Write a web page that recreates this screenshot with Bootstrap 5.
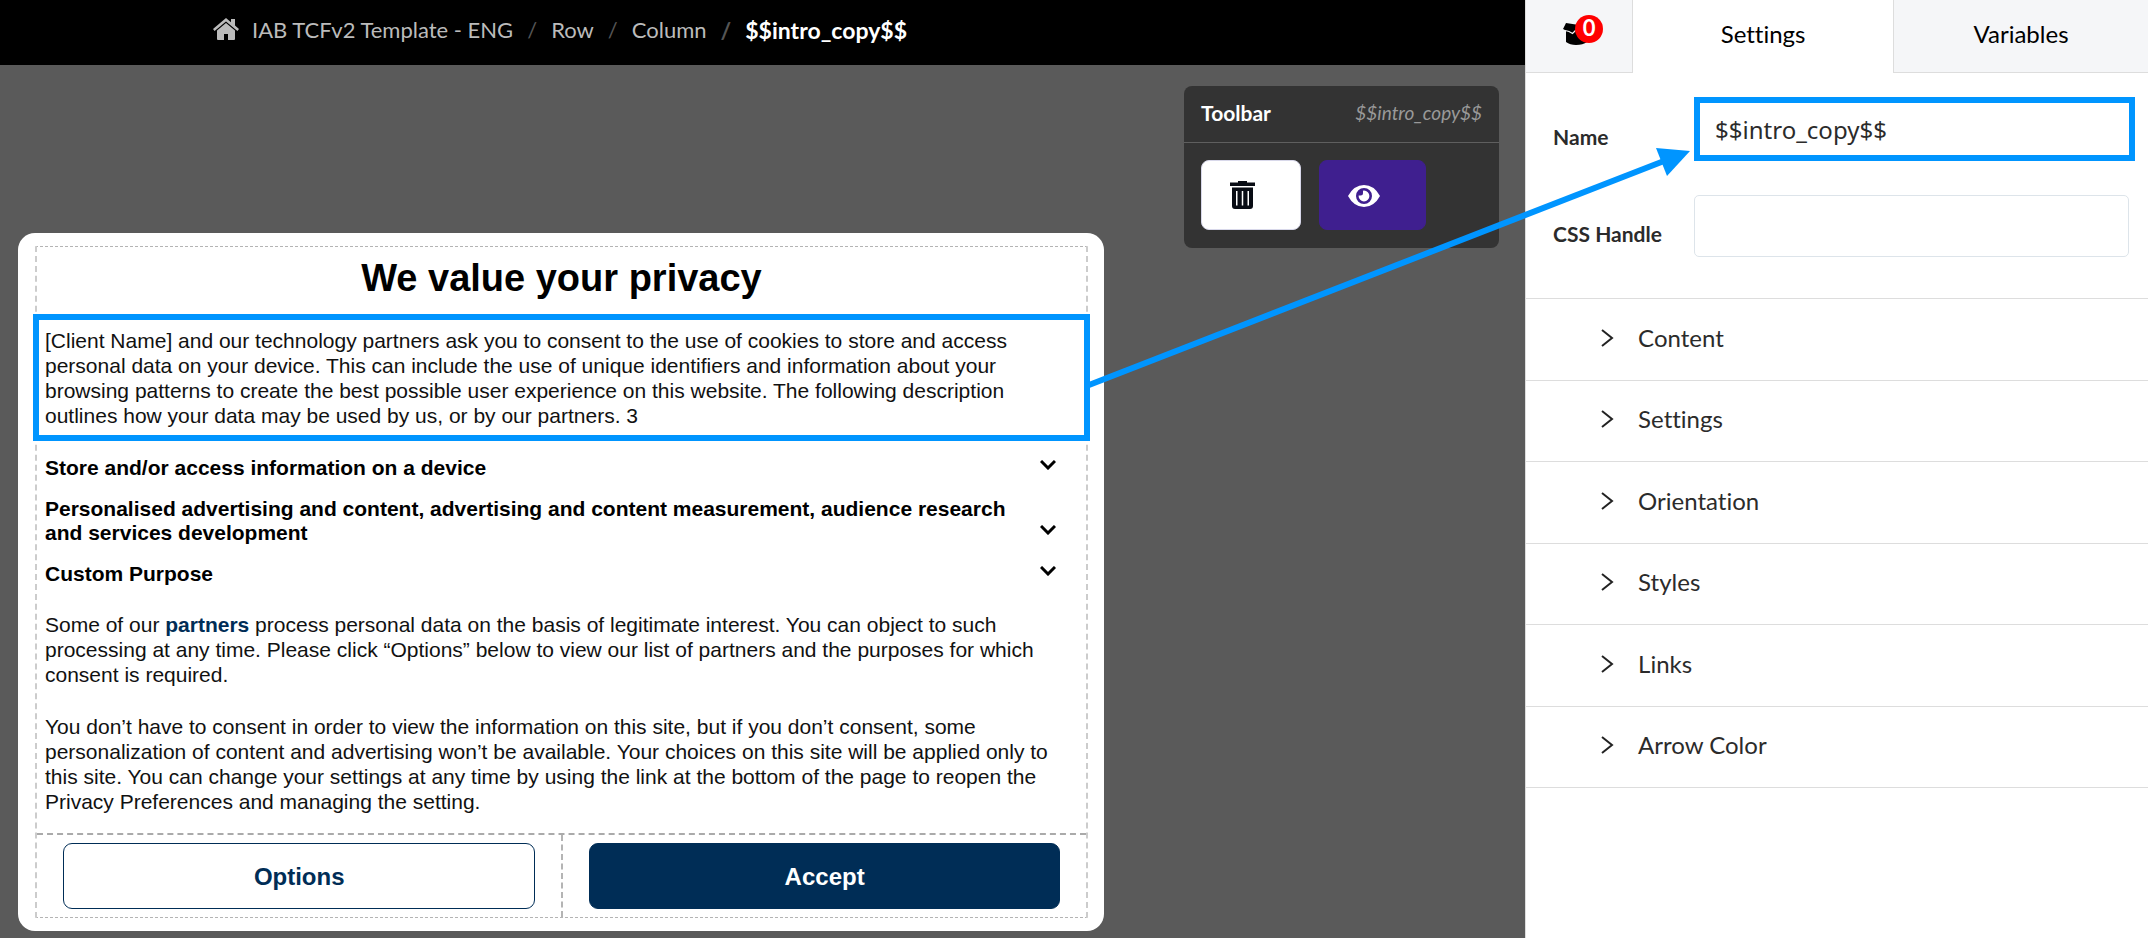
<!DOCTYPE html>
<html lang="en">
<head>
<meta charset="utf-8">
<meta name="viewport" content="width=device-width, initial-scale=1">
<title>Message builder</title>
<link href="https://cdn.jsdelivr.net/npm/bootstrap@5.3.0/dist/css/bootstrap.min.css" rel="stylesheet">
<style>
  body { font-family: Lato, "Open Sans", sans-serif; font-size: 22px; line-height: 28px; color: #2b2b2b; background: #5a5a5a; }
  body, button { font-variant-ligatures: none; }
  .workspace { background: #5a5a5a; }
  .side-panel { flex: 0 0 29%; border-left: 1px solid #ddd; }
  .topbar { height: 65px; padding: 0 213px 5px; background: #000; }
  .topbar .breadcrumb { --bs-breadcrumb-item-padding-x: 14px; --bs-breadcrumb-divider-color: #555; flex-wrap: nowrap; white-space: nowrap; }
  .topbar a { color: #bbb; }
  .topbar .active { font-size: 23px; }
  .topbar .home-icon { margin-right: 13px; margin-top: -2px; }

  .consent { flex: 0 0 71.2%; margin: 168px 0 7px 18px; padding: 13px 16px 13px 17px; border-radius: 17px; font-family: "Liberation Sans", Arial, sans-serif; font-size: 21px; line-height: 25px; color: #111; }
  .frame { border: 1px dashed #b4b4b4; border-width: 1px 2px; border-left-color: #ccc; border-right-color: #ccc; }
  .consent h1 { font-size: 38px; line-height: 46px; margin: 8px 0 13px; color: #000; }
  .picked { border: 6px solid #0095ff; margin: 0 -4px 15px; padding: 8px 70px 7px 6px; }
  .purposes { display: flex; flex-direction: column; gap: 17px; padding: 0 30px 0 8px; margin-bottom: 26px; }
  .purpose { border: 0; background: none; padding: 0; color: #000; font-weight: 700; line-height: 24px; text-align: left; display: flex; justify-content: space-between; align-items: flex-end; gap: 32px; }
  .purpose svg { margin-bottom: 10px; flex: none; }
  .legal { padding: 0 30px 0 8px; }
  .legal p { margin-bottom: 27px; }
  .legal p:last-child { margin-bottom: 19px; }
  .navy { color: #002d56; }
  .choices { border-top: 2px dashed #aaa; }
  .choices > div { padding: 8px 26px; }
  .choices > div + div { border-left: 2px dashed #b4b4b4; }
  .choice { height: 66px; border: 1px solid #002d56; border-radius: 9px; font-size: 24px; font-weight: 700; }
  .choice.outline { color: #002d56; background: #fff; }
  .choice.solid { color: #fff; background: #002d56; }

  .toolbox { width: 315px; height: 162px; margin: 21px 26px 0 0; background: #333; border-radius: 8px; }
  .toolbox header { height: 57px; padding: 0 17px 2px; border-bottom: 1px solid #5f5f5f; }
  .toolbox h2 { font-size: 21px; }
  .toolbox em { font-size: 19px; color: #999; }
  .tools { padding: 17px; gap: 18px; }
  .tool { height: 70px; width: 100px; border-radius: 8px; border: 1px solid #d8d8ea; padding: 0 28px 2px; text-align: left; }
  .tool.show-it { width: 107px; background: #3f1f8f; border-color: #3f1f8f; }

  .tabs { height: 73px; }
  .tabs button { border: 0; border-bottom: 1px solid #ddd; background: #f5f6f8; color: #000; font-size: 24px; padding-bottom: 6px; }
  .tabs .cart-tab { flex: 0 0 106px; padding: 3px 14px 2px 6px; }
  .tabs .current { background: #fff; border: 1px solid #ddd; border-width: 0 1px; flex: 0 0 262px; }
  .count { left: 12px; top: -8px; width: 28px; height: 28px; border-radius: 50%; background: #f00; font-size: 22px; line-height: 26px; }
  .fields { padding: 24px 13px 41px 27px; border-bottom: 1px solid #ddd; }
  .fields > div + div { margin-top: 34px; padding: 0 6px 0 0; }
  .fields label { flex: 0 0 141px; font-size: 21px; font-weight: 700; padding-top: 16px; white-space: nowrap; }
  .fields .form-control { border-radius: 5px; border: 1px solid #dde4ea; height: 62px; }
  .fields .form-control.marked { border: 6px solid #0095ff; border-radius: 0; height: 64px; padding: 0 15px; font: 24px "Noto Sans", sans-serif; color: #2b2b2b; }
  .groups { height: 489px; }
  .groups button { flex: 1 1 0; border: 0; border-bottom: 1px solid #ddd; background: #fff; padding: 0 75px 3px; gap: 24px; color: #2b2b2b; font-size: 24px; text-align: left; }
  .pointer { pointer-events: none; height: 938px; }
</style>
</head>
<body>
<div class="d-flex min-vh-100 position-relative">
  <main class="workspace flex-grow-1">
    <nav class="topbar d-flex align-items-center" aria-label="breadcrumb">
      <svg class="home-icon" width="26" height="22" viewBox="0 0 26 22" fill="#bbb" aria-hidden="true"><path d="M13 0 0 11l1.600 2L13 3.400 24.400 13 26 11l-4-3.400V1h-4v3.200z"/><path d="M13 5 4 12.600V21q0 1 1 1h6v-6h4v6h6q1 0 1-1v-8.400z"/></svg>
      <ol class="breadcrumb mb-0">
        <li class="breadcrumb-item"><a class="text-decoration-none" href="#">IAB TCFv2 Template - ENG</a></li>
        <li class="breadcrumb-item"><a class="text-decoration-none" href="#">Row</a></li>
        <li class="breadcrumb-item"><a class="text-decoration-none" href="#">Column</a></li>
        <li class="breadcrumb-item active fw-bold text-white" aria-current="page">$$intro_copy$$</li>
      </ol>
    </nav>
    <div class="d-flex justify-content-between align-items-start">
      <section class="consent bg-white">
        <div class="frame">
          <h1 class="text-center fw-bold">We value your privacy</h1>
          <p class="picked">[Client Name] and our technology partners ask you to consent to the use of cookies to store and access personal data on your device. This can include the use of unique identifiers and information about your browsing patterns to create the best possible user experience on this website. The following description outlines how your data may be used by us, or by our partners. 3</p>
          <div class="purposes">
            <button class="purpose" type="button">Store and/or access information on a device
              <svg width="16" height="10" viewBox="0 0 16 10" fill="none" stroke="#000" stroke-width="3"><path d="m1 1 7 7 7-7"/></svg></button>
            <button class="purpose" type="button">Personalised advertising and content, advertising and content measurement, audience research and services development
              <svg width="16" height="10" viewBox="0 0 16 10" fill="none" stroke="#000" stroke-width="3"><path d="m1 1 7 7 7-7"/></svg></button>
            <button class="purpose" type="button">Custom Purpose
              <svg width="16" height="10" viewBox="0 0 16 10" fill="none" stroke="#000" stroke-width="3"><path d="m1 1 7 7 7-7"/></svg></button>
          </div>
          <div class="legal">
            <p>Some of our <a class="navy fw-bold text-decoration-none" href="#">partners</a> process personal data on the basis of legitimate interest. You can object to such processing at any time. Please click “Options” below to view our list of partners and the purposes for which consent is required.</p>
            <p>You don’t have to consent in order to view the information on this site, but if you don’t consent, some personalization of content and advertising won’t be available. Your choices on this site will be applied only to this site. You can change your settings at any time by using the link at the bottom of the page to reopen the Privacy Preferences and managing the setting.</p>
          </div>
          <div class="choices row g-0">
            <div class="col-6"><button class="choice outline w-100" type="button">Options</button></div>
            <div class="col-6"><button class="choice solid w-100" type="button">Accept</button></div>
          </div>
        </div>
      </section>
      <aside class="toolbox">
        <header class="d-flex justify-content-between align-items-center">
          <h2 class="mb-0 fw-bold text-white">Toolbar</h2>
          <em>$$intro_copy$$</em>
        </header>
        <div class="tools d-flex">
          <button class="tool bg-white" type="button" aria-label="Delete"><svg width="25" height="28" viewBox="0 0 25 28" fill="#080c14"><path d="M8 0h9v1.500h8V5H0V1.500h8z"/><path fill-rule="evenodd" d="M2 6.500h21V25q0 3-3 3H5q-3 0-3-3zM6 10v14.500h1.500V10zm5.750 0v14.500h1.500V10zm5.750 0v14.500H19V10z"/></svg></button>
          <button class="tool show-it" type="button" aria-label="Preview"><svg width="32" height="22" viewBox="0 0 32 22"><path fill="#fff" d="M0 11Q6 0 16 0t16 11Q26 22 16 22T0 11z"/><circle cx="16" cy="11" r="6.700" fill="#fff" stroke="#3f1f8f" stroke-width="2.600"/><path fill="#3f1f8f" d="M15 5v3q0 2.500-2.500 2.500H10l1-4z"/></svg></button>
        </div>
      </aside>
    </div>
  </main>

  <aside class="side-panel bg-white">
    <div class="tabs d-flex">
      <button class="cart-tab" type="button" aria-label="Saved items">
        <span class="d-inline-block position-relative">
          <svg class="d-block" width="24" height="23" viewBox="0 0 24 23"><path d="M3 0 16 2h8v17q-4 3-11 3-6 0-10-3V8L0 6z"/><path d="m0 7 6 1.500 3.500 2L13 7" fill="none" stroke="#f5f6f8" stroke-width="1.200"/></svg>
          <span class="count position-absolute text-white fw-bold">0</span>
        </span>
      </button>
      <button class="current" type="button">Settings</button>
      <button class="flex-grow-1" type="button">Variables</button>
    </div>
    <form class="fields">
      <div class="d-flex align-items-center">
        <label for="name">Name</label>
        <input class="form-control marked" id="name" type="text" value="$$intro_copy$$">
      </div>
      <div class="d-flex align-items-center">
        <label for="handle">CSS Handle</label>
        <input class="form-control" id="handle" type="text">
      </div>
    </form>
    <div class="groups d-flex flex-column">
      <button class="d-flex align-items-center" type="button"><svg width="13" height="18" viewBox="0 0 13 18" fill="none" stroke="#222" stroke-width="2"><path d="m1 1 10 8-10 8"/></svg>Content</button>
      <button class="d-flex align-items-center" type="button"><svg width="13" height="18" viewBox="0 0 13 18" fill="none" stroke="#222" stroke-width="2"><path d="m1 1 10 8-10 8"/></svg>Settings</button>
      <button class="d-flex align-items-center" type="button"><svg width="13" height="18" viewBox="0 0 13 18" fill="none" stroke="#222" stroke-width="2"><path d="m1 1 10 8-10 8"/></svg>Orientation</button>
      <button class="d-flex align-items-center" type="button"><svg width="13" height="18" viewBox="0 0 13 18" fill="none" stroke="#222" stroke-width="2"><path d="m1 1 10 8-10 8"/></svg>Styles</button>
      <button class="d-flex align-items-center" type="button"><svg width="13" height="18" viewBox="0 0 13 18" fill="none" stroke="#222" stroke-width="2"><path d="m1 1 10 8-10 8"/></svg>Links</button>
      <button class="d-flex align-items-center" type="button"><svg width="13" height="18" viewBox="0 0 13 18" fill="none" stroke="#222" stroke-width="2"><path d="m1 1 10 8-10 8"/></svg>Arrow Color</button>
    </div>
  </aside>

  <svg class="pointer position-absolute top-0 start-0 w-100" viewBox="0 0 2148 938" preserveAspectRatio="none" aria-hidden="true">
    <path d="M1089 385 1664 161" stroke="#0095ff" stroke-width="6" fill="none"/>
    <path d="m1690 151-34-3 11 28z" fill="#0095ff"/>
  </svg>
</div>
<script src="https://cdn.jsdelivr.net/npm/bootstrap@5.3.0/dist/js/bootstrap.bundle.min.js"></script>
</body>
</html>
